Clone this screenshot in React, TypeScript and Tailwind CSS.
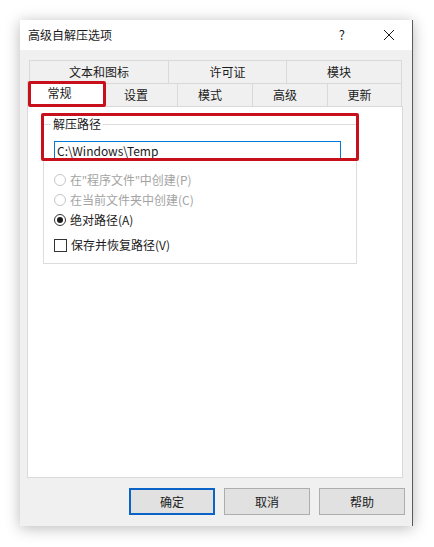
import React from "react";

const font = { fontFamily: '"Noto Sans CJK SC", "Noto Sans", sans-serif' };
const latin = { fontFamily: '"Noto Sans", sans-serif' };

function Radio({ checked, disabled, label }: { checked?: boolean; disabled?: boolean; label: React.ReactNode }) {
  return (
    <div className="flex h-[20px] items-center gap-[4px]">
      <span
        className={`flex h-[12px] w-[12px] items-center justify-center rounded-full border bg-white ${
          disabled ? "border-[#c6c6c6]" : "border-[#333333]"
        }`}
      >
        {checked ? <span className="h-[6px] w-[6px] rounded-full bg-[#1a1a1a]" /> : null}
      </span>
      <span className={`text-[12px] leading-[16px] ${disabled ? "text-[#a3a3a3]" : "text-[#1a1a1a]"}`}>{label}</span>
    </div>
  );
}

export default function App() {
  const row1 = [
    { t: "文本和图标", w: "w-[140px]", p: "" },
    { t: "许可证", w: "w-[118px]", p: "" },
    { t: "模块", w: "w-[115px]", p: "pr-[10px]" },
  ];
  const row2 = [
    { t: "设置", w: "w-[73px]" },
    { t: "模式", w: "w-[75px]" },
    { t: "高级", w: "w-[75px]" },
    { t: "更新", w: "w-[74px]" },
  ];
  return (
    <div className="relative h-[547px] w-[434px] overflow-hidden bg-white pl-[20px] pt-[20px]" style={font}>
      <div className="flex h-[506px] w-[393px] flex-col border-r border-[#5a5a5a] bg-[#f0f0f0] shadow-[0_2px_14px_rgba(0,0,0,0.28)]">
        {/* title bar */}
        <div className="flex h-[30px] items-center bg-white pl-[8px] text-[12px] text-[#1a1a1a]">
          <span className="leading-[16px]">高级自解压选项</span>
          <span className="ml-auto mr-[38px] text-[13px] leading-[16px]">?</span>
          <svg width="12" height="12" viewBox="0 0 12 12" className="mr-[17px]">
            <path d="M1 1 L11 11 M11 1 L1 11" stroke="#1a1a1a" strokeWidth="1" fill="none" />
          </svg>
        </div>

        {/* tabs */}
        <div className="ml-[9px] mt-[10px] flex w-[373px] flex-col text-[12px] leading-[16px] text-[#1a1a1a]">
          <div className="flex h-[23px]">
            {row1.map((r, i) => (
              <div
                key={r.t}
                className={`flex h-full items-center justify-center border-t border-r border-[#d9d9d9] ${r.w} ${r.p} ${
                  i === 0 ? "border-l" : ""
                }`}
              >
                {r.t}
              </div>
            ))}
          </div>
          <div className="flex h-[23px]">
            <div className="z-10 -mb-px -ml-[2px] -mt-[2px] flex h-[26px] w-[78px] items-center justify-center border-l border-r border-t border-[#d9d9d9] bg-white pb-[4px] pr-[13px]">
              常规
            </div>
            {row2.map((r) => (
              <div
                key={r.t}
                className={`flex h-full items-center justify-center border-r border-t border-[#d9d9d9] pr-[10px] ${r.w}`}
              >
                {r.t}
              </div>
            ))}
          </div>
        </div>

        {/* panel */}
        <div className="ml-[7px] h-[372px] w-[376px] border border-[#d9d9d9] bg-white">
          <div className="relative ml-[15px] mt-[17px] h-[140px] w-[314px] border border-[#dcdcdc] pl-[10px] pt-[16px]">
            <span className="absolute left-[7px] top-[-9px] bg-white px-[2px] text-[12px] leading-[16px] text-[#1a1a1a]">
              解压路径
            </span>
            <div className="flex h-[20px] w-[287px] items-center border border-[#0078d7] bg-white pl-[2px] text-[12px] leading-[16px] text-[#1a1a1a]">
              C:\Windows\Temp
            </div>
            <div className="mt-[9px] flex flex-col">
              <Radio
                disabled
                label={
                  <>
                    在<span style={latin}>"</span>程序文件<span style={latin}>"</span>中创建(P)
                  </>
                }
              />
              <Radio disabled label="在当前文件夹中创建(C)" />
              <Radio checked label="绝对路径(A)" />
            </div>
            <div className="mt-[5px] flex h-[20px] items-center gap-[4px]">
              <span className="h-[13px] w-[13px] border border-[#333333] bg-white" />
              <span className="text-[12px] leading-[16px] text-[#1a1a1a]">保存并恢复路径(V)</span>
            </div>
          </div>
        </div>

        {/* buttons */}
        <div className="mt-[10px] flex justify-end gap-[9px] pr-[7px] text-[12px] leading-[16px] text-[#1a1a1a]">
          <button className="flex h-[27px] w-[86px] items-center justify-center border-2 border-[#0a64c8] bg-[#e1e1e1]">
            确定
          </button>
          <button className="flex h-[27px] w-[86px] items-center justify-center border border-[#adadad] bg-[#e1e1e1]">
            取消
          </button>
          <button className="flex h-[27px] w-[86px] items-center justify-center border border-[#adadad] bg-[#e1e1e1]">
            帮助
          </button>
        </div>
      </div>

      {/* red annotation boxes */}
      <div className="absolute left-[28px] top-[81px] z-20 h-[26px] w-[78px] rounded-[2px] border-[3px] border-[#c8101c]" />
      <div className="absolute left-[41px] top-[113px] z-20 h-[48px] w-[318px] rounded-[2px] border-[3px] border-[#c8101c]" />
    </div>
  );
}
